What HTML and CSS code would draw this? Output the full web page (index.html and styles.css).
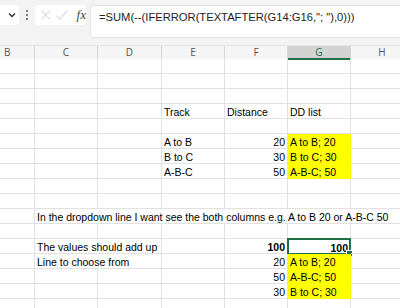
FILE: index.html
```html
<!DOCTYPE html>
<html lang="en">
<head>
    <meta charset="UTF-8">
    <meta name="viewport" content="width=device-width, initial-scale=1.0">
    <title>Track list</title>
    <link rel="stylesheet" href="styles.css">
</head>
<body>
    <div class="formula-bar">
        <div class="name-box">
            <svg width="10" height="10" viewBox="0 0 10 10"><path d="M2 3.5 L5 6.5 L8 3.5" fill="none" stroke="#333" stroke-width="1.4"/></svg>
        </div>
        <div class="grip">
            <svg width="4" height="12" viewBox="0 0 4 12"><circle cx="2" cy="2" r="1" fill="#555"/><circle cx="2" cy="6" r="1" fill="#555"/><circle cx="2" cy="10" r="1" fill="#555"/></svg>
        </div>
        <div class="fx-box">
            <svg width="12" height="12" viewBox="0 0 12 12"><path d="M1.5 1.5 L10.5 10.5 M10.5 1.5 L1.5 10.5" stroke="#c4c4c4" stroke-width="1"/></svg>
            <svg width="14" height="12" viewBox="0 0 14 12"><path d="M1 6.5 L5 10.5 L13 1.5" fill="none" stroke="#c4c4c4" stroke-width="1"/></svg>
            <span class="fx">fx</span>
        </div>
        <div class="formula">=SUM(--(IFERROR(TEXTAFTER(G14:G16,"; "),0)))</div>
    </div>

    <div class="sheet">
        <div class="heads">
            <div>B</div><div>C</div><div>D</div><div>E</div><div>F</div><div class="active">G</div><div>H</div>
        </div>

        <div class="row"><div></div><div></div><div></div><div></div><div></div><div></div><div></div></div>
        <div class="row"><div></div><div></div><div></div><div></div><div></div><div></div><div></div></div>
        <div class="row"><div></div><div></div><div></div><div></div><div></div><div></div><div></div></div>
        <div class="row"><div></div><div></div><div></div><div>Track</div><div>Distance</div><div>DD list</div><div></div></div>
        <div class="row"><div></div><div></div><div></div><div></div><div></div><div></div><div></div></div>
        <div class="row"><div></div><div></div><div></div><div>A to B</div><div class="num">20</div><div class="fill">A to B; 20</div><div></div></div>
        <div class="row"><div></div><div></div><div></div><div>B to C</div><div class="num">30</div><div class="fill">B to C; 30</div><div></div></div>
        <div class="row"><div></div><div></div><div></div><div>A-B-C</div><div class="num">50</div><div class="fill">A-B-C; 50</div><div></div></div>
        <div class="row"><div></div><div></div><div></div><div></div><div></div><div></div><div></div></div>
        <div class="row"><div></div><div></div><div></div><div></div><div></div><div></div><div></div></div>
        <div class="row"><div></div><div class="span6">In the dropdown line I want see the both columns e.g. A to B 20 or A-B-C 50</div></div>
        <div class="row"><div></div><div></div><div></div><div></div><div></div><div></div><div></div></div>
        <div class="row"><div></div><div class="span2">The values should add up</div><div></div><div class="num bold">100</div><div class="num bold selected">100</div><div></div></div>
        <div class="row"><div></div><div class="span2">Line to choose from</div><div></div><div class="num">20</div><div class="fill">A to B; 20</div><div></div></div>
        <div class="row"><div></div><div></div><div></div><div></div><div class="num">50</div><div class="fill">A-B-C; 50</div><div></div></div>
        <div class="row"><div></div><div></div><div></div><div></div><div class="num">30</div><div class="fill">B to C; 30</div><div></div></div>
        <div class="row"><div></div><div></div><div></div><div></div><div></div><div></div><div></div></div>
    </div>
</body>
</html>
```

FILE: styles.css
```css
:root {
    --grid: #e1e1e1;
    --head: #f5f5f5;
    --green: #1e7145;
    --yellow: #ffff00;
}

* {
    margin: 0;
    padding: 0;
    box-sizing: border-box;
}

body {
    width: 400px;
    height: 308px;
    overflow: hidden;
    background: #ffffff;
    font-family: 'Liberation Sans', Arial, sans-serif;
}

/* formula bar */
.formula-bar {
    height: 45px;
    background: #f3f3f3;
    display: flex;
    align-items: flex-start;
    padding-top: 5px;
}

.name-box {
    width: 19px;
    height: 20px;
    background: #ffffff;
    border-radius: 0 4px 4px 0;
    display: flex;
    align-items: center;
    justify-content: flex-end;
    padding-right: 2px;
}

.grip {
    width: 16px;
    height: 20px;
    display: flex;
    align-items: center;
    justify-content: center;
}

.fx-box {
    width: 51px;
    height: 20px;
    background: #ffffff;
    border-radius: 4px;
    display: flex;
    align-items: center;
    gap: 4px;
    padding-left: 5px;
}

.fx {
    font-family: 'Liberation Serif', 'Times New Roman', serif;
    font-style: italic;
    font-size: 13px;
    color: #444;
    margin-left: 4px;
}

.formula {
    flex: 1;
    height: 33px;
    margin-left: 4px;
    background: #ffffff;
    border: 1px solid #e3e3e3;
    border-right: none;
    border-radius: 4px 0 0 4px;
    padding: 5px 0 0 8px;
    font-size: 11.2px;
    color: #222;
    white-space: nowrap;
}

/* sheet */
.sheet {
    font-size: 10.5px;
    color: #000;
}

.heads,
.row {
    display: grid;
    grid-template-columns: 35px 63px 64px 63px 63px 63px 63px;
}

.heads {
    height: 14px;
    background: var(--head);
    border-top: 1px solid #e6e6e6;
    font-family: 'Open Sans', sans-serif;
    font-size: 10px;
    color: #555;
}

.heads div {
    border-right: 1px solid #d6d6d6;
    text-align: center;
    line-height: 13px;
}

.heads div:first-child {
    text-align: left;
    padding-left: 4px;
}

.heads .active {
    background: #d3d3d3;
    color: #1e6b45;
    border-bottom: 2px solid var(--green);
    line-height: 12px;
}

.row {
    height: 15px;
}

.row div {
    height: 15px;
    border-right: 1px solid var(--grid);
    border-bottom: 1px solid var(--grid);
    padding: 2px 2px 0;
    line-height: 13px;
    white-space: nowrap;
    position: relative;
}

.row .span6 {
    grid-column: span 6;
}

.row .span2 {
    grid-column: span 2;
}

.num {
    text-align: right;
}

.bold {
    font-weight: bold;
}

.row .fill {
    background: var(--yellow);
    border-color: var(--yellow);
}

.row .selected {
    border: 2px solid var(--green);
    margin: -1px 0 -1px -1px;
    height: 17px;
    padding: 1px 1px 0 2px;
    line-height: 14px;
}

.selected::after {
    content: '';
    position: absolute;
    right: -4px;
    bottom: -4px;
    width: 5px;
    height: 5px;
    background: var(--green);
    border: 1px solid #ffffff;
}
```
